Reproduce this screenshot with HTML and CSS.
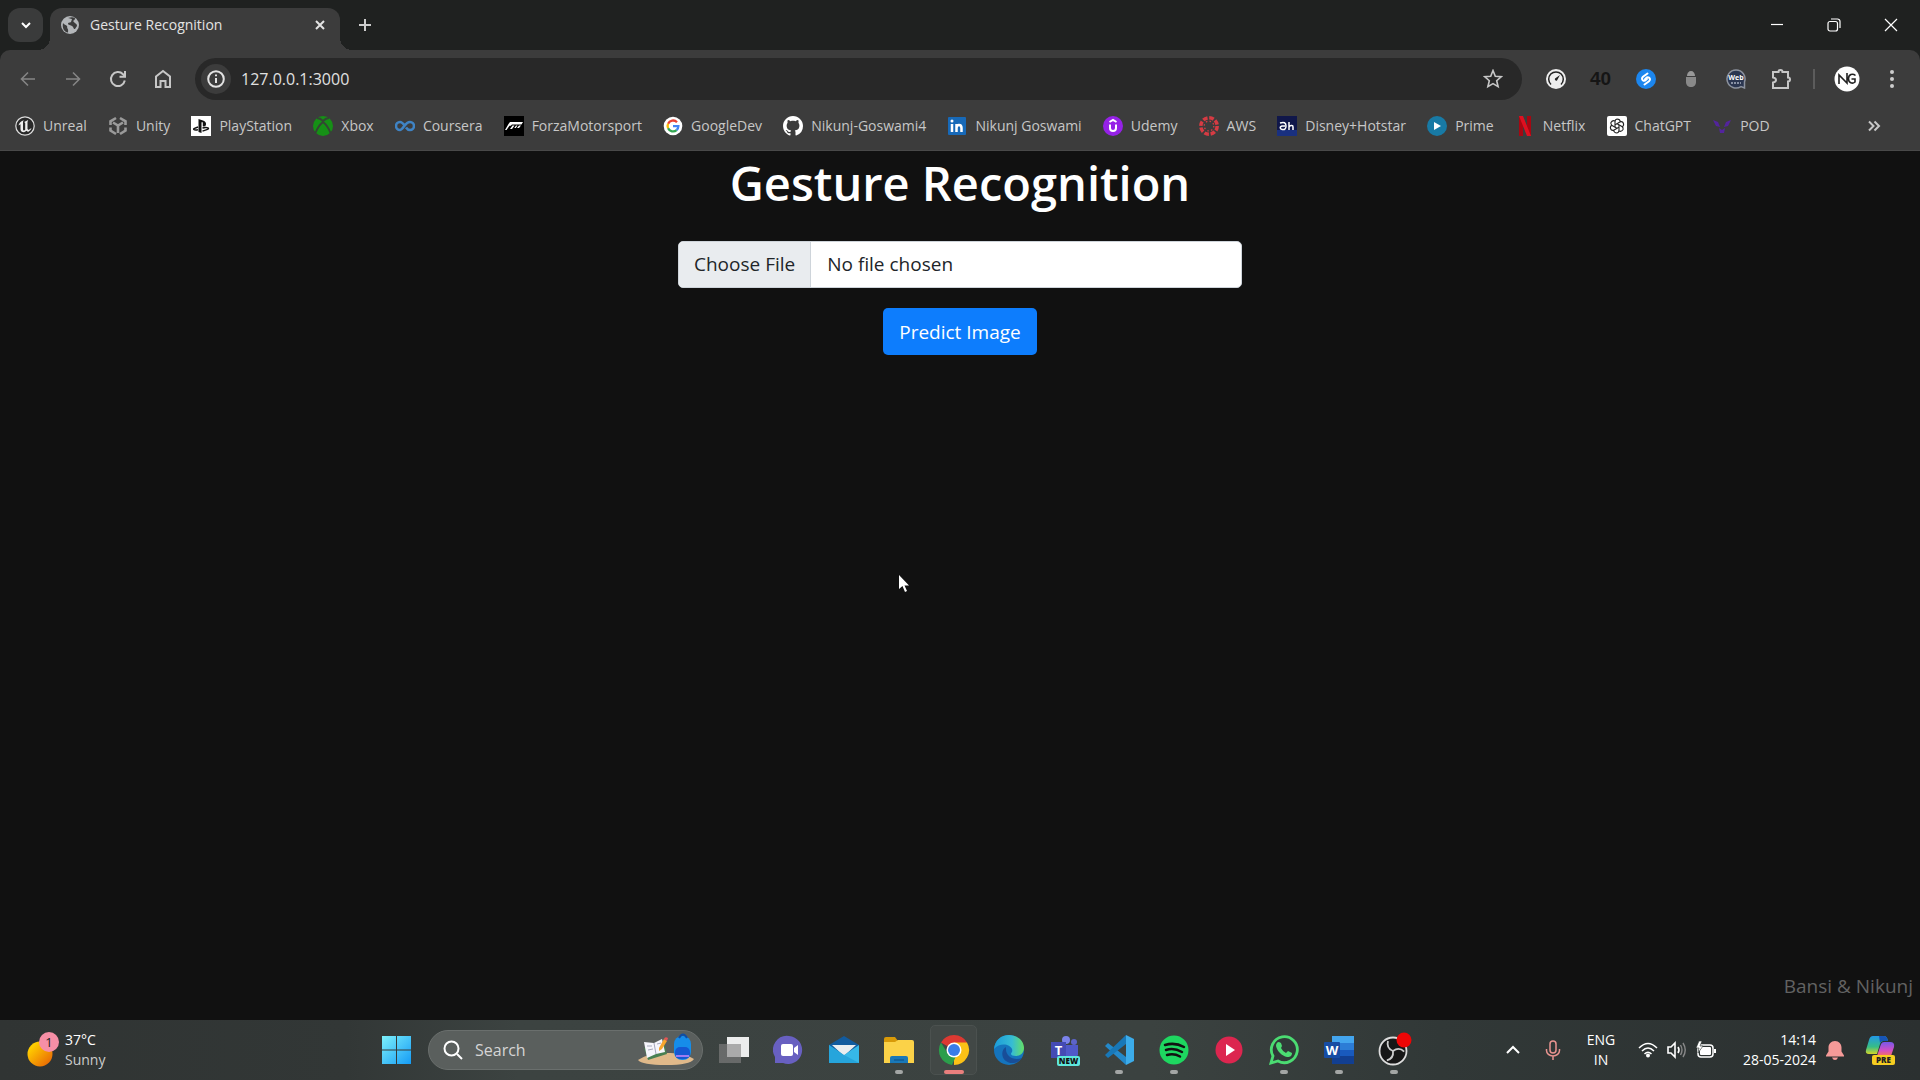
FILE: index.html
```html
<!DOCTYPE html>
<html lang="en">
<head>
<meta charset="utf-8">
<meta name="viewport" content="width=device-width, initial-scale=1">
<title>Gesture Recognition</title>
<link rel="stylesheet" href="styles.css">
</head>
<body>
<div class="screen">
  <header class="browser">
    <div class="titlebar">
      <button class="tab-search" aria-label="Search tabs"><svg width="12" height="12" viewBox="0 0 12 12"><path class="line strong" d="M2 4l4 4 4-4"/></svg></button>
      <div class="tab">
        <svg width="20" height="20" viewBox="0 0 20 20"><circle cx="10" cy="10" r="9" fill="#b4b7ba"/><path fill="#3c3c3c" d="M3 8c1 2 3 1.500 4 3 .6 1-.2 1.600.5 2.500 1 1.200.5 3 .5 4C4 17 2 13 3 8zM8 3c2 0 2 1 4 1l-1 3c-1 1-3 0-3 2 0 1 3 1 4 2 2 1 1 3 3 3l2-3c0-3-2-2-3-4l-1-1c1-1 2-1 2-3C13 2 11 2 8 3z"/></svg>
        <span class="tab-title">Gesture Recognition</span>
        <button class="tab-close" aria-label="Close tab"><svg width="12" height="12" viewBox="0 0 12 12"><path class="line strong" d="M2 2l8 8M10 2l-8 8"/></svg></button>
      </div>
      <button class="new-tab" aria-label="New tab"><svg width="14" height="14" viewBox="0 0 14 14"><path class="line strong" d="M7 1v12M1 7h12"/></svg></button>
      <div class="window-controls">
        <button aria-label="Minimize"><svg width="14" height="14" viewBox="0 0 14 14"><path class="line thin" d="M1 6.500h12"/></svg></button>
        <button aria-label="Restore"><svg width="14" height="14" viewBox="0 0 14 14"><rect class="line thin" x="1" y="3.500" width="9.500" height="9.500" rx="2"/><path class="line thin" d="M4 1h6.500a2.500 2.500 0 0 1 2.500 2.500V10"/></svg></button>
        <button aria-label="Close"><svg width="14" height="14" viewBox="0 0 14 14"><path class="line thin" d="M1 1l12 12M13 1L1 13"/></svg></button>
      </div>
    </div>
    <div class="toolbar-frame">
    <div class="toolbar">
      <button class="slot dim" aria-label="Back"><svg width="16" height="16" viewBox="0 0 16 16"><path class="line mid" d="M15 8H2M8 1.500L1.500 8 8 14.500"/></svg></button>
      <button class="slot dim" aria-label="Forward"><svg width="16" height="16" viewBox="0 0 16 16"><path class="line mid" d="M1 8h13M8 1.500L14.500 8 8 14.500"/></svg></button>
      <button class="slot" aria-label="Reload"><svg width="18" height="18" viewBox="0 0 18 18"><path class="line strong" d="M15.800 10.500A7 7 0 1 1 14 4.200l2 2"/><path class="line strong" d="M16 1v5.700h-5.500"/></svg></button>
      <button class="slot" aria-label="Home"><svg width="18" height="20" viewBox="0 0 18 20"><path class="line strong" d="M2 7.500L9 2l7 5.500V18h-4.500v-6h-5v6H2z"/></svg></button>
      <div class="omnibox">
        <button class="site-info" aria-label="View site information"><svg width="18" height="18" viewBox="0 0 18 18"><circle class="line strong" cx="9" cy="9" r="7.800"/><path class="line strong" d="M9 8v5M9 4.500v1.800"/></svg></button>
        <input class="address" type="text" aria-label="Address" value="127.0.0.1:3000">
        <button class="star" aria-label="Bookmark this page"><svg width="20" height="20" viewBox="0 0 20 20"><path class="line mid" d="M10 1.500l2.300 5.700 6 .5-4.600 4 1.400 6L10 14.600l-5.100 3.100 1.400-6-4.600-4 6-.5z"/></svg></button>
      </div>
      <button class="slot" aria-label="Speed test"><svg width="20" height="20" viewBox="0 0 20 20"><circle cx="10" cy="10" r="10" fill="#eee"/><path d="M5 15.500a7.300 7.300 0 1 1 10 0" fill="none" stroke="#222" stroke-width="1.500"/><path d="M14 6l-3 5.500a1.500 1.500 0 0 1-2-2z" fill="#222"/></svg></button>
      <button class="slot count" aria-label="Counter">40</button>
      <button class="slot" aria-label="Shazam"><svg width="20" height="20" viewBox="0 0 20 20"><circle cx="10" cy="10" r="10" fill="#1c86ee"/><path d="M11.500 4.500L7 7.800q-2 2 0 3.600 1.500 1 3-.5l1-1M8.500 15.500l4.500-3.300q2-2 0-3.600-1.500-1-3 .5l-1 1" fill="none" stroke="#fff" stroke-width="2" stroke-linecap="round"/></svg></button>
      <button class="slot" aria-label="Incognito helper"><svg width="12" height="18" viewBox="0 0 12 18"><path d="M2 6a4 5 0 0 1 8 0z" fill="#999"/><path d="M1 7h10v5c0 3-2 5-5 5s-5-2-5-5z" fill="#898989"/></svg></button>
      <button class="slot" aria-label="WebChatGPT"><svg width="20" height="20" viewBox="0 0 20 20"><path d="M10 1a9 9 0 1 0 5 16.500l3.500 1.500V13A9 9 0 0 0 10 1z" fill="#2b3650" stroke="#8c929e" stroke-width="1.500"/><text x="10" y="11" text-anchor="middle" font-size="7" font-weight="700" fill="#fff">Web</text><path d="M5 14h10" stroke="#a7afbf" stroke-width="1.500" stroke-dasharray="2 1"/></svg></button>
      <button class="slot" aria-label="Extensions"><svg width="22" height="22" viewBox="0 0 22 22"><path class="line strong" d="M3 4h5.500a2 2 0 0 1 4 0H18v5.500a2 2 0 0 1 0 4V20H3v-5.500q3-.5 3-2.500T3 9.500z"/></svg></button>
      <span class="divider"></span>
      <button class="slot" aria-label="Profile"><svg width="26" height="26" viewBox="0 0 26 26"><circle cx="13" cy="13" r="12.500" fill="#fff"/><path d="M5 18V9l8 8V7M21.500 9.500c-3-2.500-7-1-7 3.200 0 4.300 4 5.500 6.500 3.300v-3h-3.500" fill="none" stroke="#222" stroke-width="1.600"/></svg></button>
      <button class="slot" aria-label="Menu"><svg width="6" height="20" viewBox="0 0 6 20"><g fill="#ccc"><circle cx="3" cy="3" r="2"/><circle cx="3" cy="10" r="2"/><circle cx="3" cy="17" r="2"/></g></svg></button>
    </div>
    <nav class="bookmarks" aria-label="Bookmarks">
      <a href="#"><svg viewBox="0 0 20 20"><circle cx="10" cy="10" r="9.200" fill="#292929" stroke="#ddd" stroke-width="1.200"/><path fill="#eee" d="M3.500 9.500C4 7 6 5 9 4.300 8.200 5 8 5.500 8 6.500v7c0 1 1.200 1.300 2.200.3V7l-1-1 4-2-.7 2v7l1 1L16.500 12c-.8 2.200-2 3.200-3.500 4l-1.300-1.300L9 16.300c-2.200 0-3.500-1-3.500-3V8.300z"/></svg>Unreal</a>
      <a href="#"><svg viewBox="0 0 20 20"><g fill="none" stroke="#9a9a9a" stroke-width="2.600"><path d="M8 2L2.500 5.300V9M12 2l5.500 3.300V9M2.500 11.500v3L8 18M17.500 11.500v3L12 18"/><path d="M5 6.500l5 3 5-3M10 9.500V17"/></g></svg>Unity</a>
      <a href="#"><svg viewBox="0 0 20 20"><path fill="#fff" d="M0 0h20v20H0z"/><path fill="#111" d="M7.500 3l4.500 1.400c2.500.9 3.200 2.300 3 4.200-.3 1.900-1.500 2.300-3.200 1.600V6.500q-.9-1.200-1.300 0V17l-3-1z"/><path d="M7 11l-4 1.600q-1 .8.500 1.300 1.800.4 3.500-.3M11.500 12q3.500-1 5.500-.1 1.200.8-.5 1.400l-5 1.800" fill="none" stroke="#111" stroke-width="1.400"/></svg>PlayStation</a>
      <a href="#"><svg viewBox="0 0 20 20"><circle cx="10" cy="10" r="10" fill="#169016"/><path d="M4 2q3 0 6 3 3-3 6-3M2.500 17Q5 10 10 6q5 4 7.500 11" fill="none" stroke="#344534" stroke-width="1.900"/></svg>Xbox</a>
      <a href="#"><svg viewBox="0 0 20 20"><path d="M10 10C7.500 6.500 6.500 6 5 6a4 4 0 0 0 0 8c3 0 5-8 10-8a4 4 0 0 1 0 8c-2 0-3-1-4-2.500" fill="none" stroke="#3f83c4" stroke-width="2.600"/></svg>Coursera</a>
      <a href="#"><svg viewBox="0 0 20 20"><path d="M0 0h20v20H0z"/><path fill="#fff" d="M6 6h13l-1.500 2.500H8L6.800 9.700H5.500L2.500 14H1l3.500-6zM8.500 9.500h2L8 13H6zM12 9.500h1.500l-1.700 2.500h-1.500zM15 9.500h2l-2 2.500h-2z"/></svg>ForzaMotorsport</a>
      <a href="#"><svg viewBox="0 0 20 20"><circle cx="10" cy="10" r="9.300" fill="#fff"/><g fill="none" stroke-width="2.300"><path d="M14 6.200A5.400 5.400 0 0 0 5.100 7.800" stroke="#ea4335"/><path d="M5.100 7.800a5.400 5.400 0 0 0 0 4.500" stroke="#fbbc05"/><path d="M5.100 12.200a5.400 5.400 0 0 0 8.500 1.900" stroke="#34a853"/><path d="M13.600 14.100a5.400 5.400 0 0 0 1.800-4H10" stroke="#4285f4"/></g></svg>GoogleDev</a>
      <a href="#"><svg viewBox="0 0 16 16"><path fill="#fff" d="M8 0C3.580 0 0 3.580 0 8c0 3.540 2.290 6.530 5.470 7.590.4.070.55-.17.55-.38 0-.19-.01-.82-.01-1.490-2.010.37-2.530-.49-2.690-.94-.09-.23-.48-.94-.82-1.130-.28-.15-.68-.52-.01-.53.63-.01 1.080.58 1.230.82.72 1.210 1.870.87 2.330.66.07-.52.28-.87.51-1.070-1.780-.2-3.640-.89-3.640-3.950 0-.87.31-1.590.82-2.150-.08-.2-.36-1.020.08-2.120 0 0 .67-.21 2.200.82.64-.18 1.320-.27 2-.27s1.360.09 2 .27c1.530-1.040 2.200-.82 2.200-.82.44 1.100.16 1.920.08 2.120.51.56.82 1.270.82 2.150 0 3.070-1.870 3.750-3.650 3.950.29.25.54.73.54 1.480 0 1.070-.01 1.930-.01 2.200 0 .21.15.46.55.38A8 8 0 0 0 16 8c0-4.420-3.580-8-8-8z"/></svg>Nikunj-Goswami4</a>
      <a href="#"><svg viewBox="0 0 20 20"><rect x="1" y="1" width="18" height="18" rx="1" fill="#1769b8"/><path d="M5 8v8M9.500 16V8M9.500 12q0-3 2.500-3t2.500 3v4" fill="none" stroke="#fff" stroke-width="2.500"/><circle cx="5" cy="5" r="1.500" fill="#fff"/></svg>Nikunj Goswami</a>
      <a href="#"><svg viewBox="0 0 20 20"><circle cx="10" cy="10" r="10" fill="#9521e6"/><path d="M6.500 6L10 4l3.500 2M7 8.500V12q0 3 3 3t3-3V8.500" fill="none" stroke="#fff" stroke-width="2"/></svg>Udemy</a>
      <a href="#"><svg viewBox="0 0 20 20"><circle cx="10" cy="10" r="8.200" fill="none" stroke="#d63b43" stroke-width="3.500" stroke-dasharray="4.700 1.740"/><circle cx="10" cy="10" r="4.800" fill="none" stroke="#d63b43" stroke-width="1.300" stroke-dasharray="1.500 2.270"/></svg>AWS</a>
      <a href="#"><svg viewBox="0 0 20 20"><path fill="#10174a" d="M0 0h20v20H0z"/><path fill="#193080" d="M0 14h20v6H0z"/><path d="M3 7q6-2 6 3t-5 3q-2-2 1-3h3M12 6v8M12 11q1-2 3-1.500 1 0 1 1.500v3" fill="none" stroke="#fff" stroke-width="1.500"/></svg>Disney+Hotstar</a>
      <a href="#"><svg viewBox="0 0 20 20"><circle cx="10" cy="10" r="10" fill="#187aa5"/><path fill="#fff" d="M7 6l7 4-7 4z"/></svg>Prime</a>
      <a href="#"><svg viewBox="0 0 20 20"><path fill="#a60712" d="M4 0h4v20H4zM12 0h4v20h-4z"/><path fill="#df1020" d="M4 0h4l8 20h-4z"/></svg>Netflix</a>
      <a href="#"><svg viewBox="0 0 20 20"><rect width="20" height="20" rx="2" fill="#fff"/><g fill="none" stroke="#222" stroke-width="1.100"><path id="petal" d="M8 11V5.500q0-2 2-2.500 3 0 3.500 3"/><use href="#petal" transform="rotate(60 10 10)"/><use href="#petal" transform="rotate(120 10 10)"/><use href="#petal" transform="rotate(180 10 10)"/><use href="#petal" transform="rotate(240 10 10)"/><use href="#petal" transform="rotate(300 10 10)"/></g></svg>ChatGPT</a>
      <a href="#"><svg viewBox="0 0 20 20"><path d="M1 4l5 2 2 5-4-1zM19 4l-5 2-2 5 4-1zM7 12l3 2 3-2-1 5H8z" fill="#53249d"/></svg>POD</a>
      <button class="more" aria-label="More bookmarks"><svg width="14" height="12" viewBox="0 0 14 12"><path class="line strong" d="M2 1.500L6.500 6 2 10.500M7.500 1.500L12 6l-4.500 4.500"/></svg></button>
    </nav>
    </div>
  </header>

  <main class="page">
    <h1>Gesture Recognition</h1>
    <form class="predict">
      <input class="file" type="file" aria-label="Image to predict">
      <button class="submit" type="button">Predict Image</button>
    </form>
    <p class="credit">Bansi &amp; Nikunj</p>
    <svg class="cursor" width="12" height="18" viewBox="0 0 12 18"><path fill="#fff" d="M0 0v14l3.500-3 2.500 6 2-1-2.500-5.500H10z"/></svg>
  </main>

  <footer class="taskbar">
    <a class="weather" href="#">
      <svg width="32" height="36" viewBox="0 0 32 36"><defs><linearGradient id="sun" x2="1" y2="1"><stop offset=".2" stop-color="#fc0"/><stop offset="1" stop-color="#e55a06"/></linearGradient></defs><circle cx="13" cy="22" r="12.500" fill="url(#sun)"/><circle cx="22" cy="10" r="10" fill="#f68fa6"/><text x="22" y="15" text-anchor="middle" font-size="13" fill="#222">1</text></svg>
      <span class="weather-text"><span>37°C</span><span class="soft">Sunny</span></span>
    </a>
    <nav class="apps" aria-label="Taskbar">
      <button class="app" aria-label="Start"><svg width="30" height="30" viewBox="0 0 30 30"><defs><linearGradient id="win" x2="1" y2="1"><stop stop-color="#7df1fb"/><stop offset="1" stop-color="#159bf5"/></linearGradient></defs><path fill="url(#win)" d="M0 1h14v13.500H0zM15 1h14v13.500H15zM0 15.500h14V29H0zM15 15.500h14V29H15z"/></svg></button>
      <label class="search">
        <svg width="20" height="20" viewBox="0 0 20 20"><circle class="line strong" cx="8.500" cy="8.500" r="7"/><path class="line strong" d="M14 14l5 5"/></svg>
        <input type="text" placeholder="Search" aria-label="Search">
        <svg width="58" height="34" viewBox="0 0 58 34"><path d="M1 27q12-8 28-7 18-1 28 6-4 6-28 6T1 27z" fill="#e0b98a"/><path d="M7 15l20-6 3 12-19 6z" fill="#488052"/><path d="M7 9l10 1 8-4 3 13-9 2-9 4z" fill="#f5f5fb"/><path d="M17 10l2 11M10 13l5 0M11 17l5-1M20 11l4-1" stroke="#a5a7bb"/><path d="M22 15l5-9 3 2-5 8-3 2z" fill="#f7a62e"/><path d="M27 6q1-3 4-1l-1 3z" fill="#e65555"/><rect x="37" y="3" width="17" height="24" rx="8" fill="#168de9"/><path d="M42 5q4-7 8 0" fill="none" stroke="#0e4da6" stroke-width="2"/><rect x="38" y="14" width="15" height="12" rx="5" fill="#1558d2"/><path d="M39 23h13" stroke="#9e7bf2" stroke-width="2"/></svg>
      </label>
      <button class="app" aria-label="Task view"><svg width="32" height="30" viewBox="0 0 32 30"><path fill="#eceded" d="M9 2h22v20H9z"/><path fill="#777" fill-opacity=".75" d="M1 9h22v19H1z"/><path fill="#aaa" d="M9 9h14v13H9z"/></svg></button>
      <button class="app" aria-label="Chat"><svg width="32" height="30" viewBox="0 0 32 30"><path d="M16 1a14 14 0 1 1-6 27H2v-6A14 14 0 0 1 16 1z" fill="#6860c1"/><rect x="8" y="9" width="12" height="12" rx="2" fill="#fff"/><path fill="#fff" d="M21 13l4-3v10l-4-3z"/></svg></button>
      <button class="app" aria-label="Mail"><svg width="32" height="30" viewBox="0 0 32 30"><path fill="#125b9e" d="M1 10L16 1l15 9v8H1z"/><path fill="#e9edf0" d="M4 10h24l-12 11z"/><path fill="#36b8e8" d="M1 10l15 10 15-10v18H1z"/><path fill="#1691d0" d="M16 20l15 8H1V10z" opacity=".5"/></svg></button>
      <button class="app running" aria-label="File Explorer"><svg width="32" height="30" viewBox="0 0 32 30"><path fill="#d89a08" d="M1 4q0-2 2-2h9l3 4v6H1z"/><path fill="#fbd248" d="M1 7l11 0 3-2h14q2 0 2 2v21H1z"/><path fill="#1978b8" d="M7 28v-5q0-2 2-2h14q2 0 2 2v5z"/><path d="M11 25h10" stroke="#0b4d82"/></svg></button>
      <button class="app running active" aria-label="Chrome"><svg width="32" height="32" viewBox="0 0 32 32"><path fill="#dc3932" d="M16 16L3 8.500a15 15 0 0 1 26 0z"/><path fill="#fbc116" d="M16 16V8.500h13A15 15 0 0 1 16 31z"/><path fill="#2b9e4b" d="M3 8.500L10 20l8 2-4 9A15 15 0 0 1 3 8.500z"/><circle cx="16" cy="16" r="7.500" fill="#fff"/><circle cx="16" cy="16" r="6" fill="#397de8"/></svg></button>
      <button class="app" aria-label="Edge"><svg width="32" height="32" viewBox="0 0 32 32"><defs><linearGradient id="edge"><stop stop-color="#1b9bda"/><stop offset=".6" stop-color="#36bcd4"/><stop offset="1" stop-color="#65df65"/></linearGradient></defs><circle cx="16" cy="16" r="15" fill="#1574bd"/><path fill="url(#edge)" d="M1 15C2 6 8 1 16 1c9 0 15 6 15 13 0 5-4 8-8 8-3 0-5-1-5-2s2-2 1-5C17 10 7 8 1 15z"/><path fill="#184e98" d="M13 13c-7 4-4 17 8 16 4-1 6-2 8-5-8 3-17-1-16-11z"/></svg></button>
      <button class="app" aria-label="Microsoft Teams"><svg width="32" height="32" viewBox="0 0 32 32"><circle cx="18" cy="6" r="4" fill="#7b83eb"/><circle cx="26" cy="8" r="3" fill="#5d64c9"/><path fill="#5059c9" d="M12 11h18v10l-4 5H12z"/><path fill="#444ab4" d="M3 8h15v16H3z"/><text x="10.500" y="21" text-anchor="middle" font-size="13" font-weight="700" fill="#fff">T</text><rect x="9" y="22" width="23" height="10" rx="2" fill="#5ee7dd"/><text x="20.500" y="30" text-anchor="middle" font-size="8" font-weight="800" fill="#111">NEW</text></svg></button>
      <button class="app running" aria-label="Visual Studio Code"><svg width="32" height="32" viewBox="0 0 32 32"><path fill="#2489ca" d="M2 12l3-3 18 14v8z"/><path fill="#1878b8" d="M23 1v9L5 24l-3-3z"/><path fill="#3cacea" d="M23 1l8 4v22l-8 4z"/></svg></button>
      <button class="app running" aria-label="Spotify"><svg width="32" height="32" viewBox="0 0 32 32"><circle cx="16" cy="16" r="14.500" fill="#1ed760"/><path d="M7 11q10-3 19 2M8 16q8-2.500 16 2M9 21q7-2 13 1.500" fill="none" stroke="#111" stroke-width="2.500" stroke-linecap="round"/></svg></button>
      <button class="app" aria-label="Media player"><svg width="32" height="32" viewBox="0 0 32 32"><circle cx="16" cy="16" r="13.500" fill="#dc264f"/><path fill="#fff" d="M13 10l9 6-9 6z"/></svg></button>
      <button class="app running" aria-label="WhatsApp"><svg width="32" height="32" viewBox="0 0 32 32"><path d="M3 29l2-7a13 13 0 1 1 5 5z" fill="#303a38" stroke="#4bdc72" stroke-width="2.800"/><path fill="#4bdc72" d="M11 8l2 1 1 3-1 2q2 4 5 5l2-2 4 2c0 4-3 4-5 4-5-1-10-6-11-11 0-2 1-4 3-4z"/></svg></button>
      <button class="app running" aria-label="Word"><svg width="32" height="32" viewBox="0 0 32 32"><path fill="#43a5ee" d="M9 2h22v8H9z"/><path fill="#2c7cd6" d="M9 9h22v8H9z"/><path fill="#195abd" d="M9 16h22v7H9z"/><path fill="#123f91" d="M9 22h22v8H9z"/><rect x="1" y="8" width="16" height="16" rx="1" fill="#164ca4"/><text x="9" y="21" text-anchor="middle" font-size="13" font-weight="700" fill="#fff">W</text></svg></button>
      <button class="app running" aria-label="OBS Studio"><svg width="36" height="36" viewBox="0 0 36 36"><circle cx="17" cy="19" r="13.500" fill="#171717" stroke="#ddd" stroke-width="1.800"/><g fill="none" stroke="#ccc" stroke-width="1.800"><path id="blade" d="M17 19q-7-3-5-10"/><use href="#blade" transform="rotate(120 17 19)"/><use href="#blade" transform="rotate(240 17 19)"/></g><circle cx="28" cy="8" r="7.500" fill="#ed0606"/></svg></button>
    </nav>
    <div class="tray">
      <button class="slot small" aria-label="Show hidden icons"><svg width="16" height="10" viewBox="0 0 16 10"><path class="line strong" d="M2 8l6-6 6 6"/></svg></button>
      <button class="slot small" aria-label="Microphone"><svg width="16" height="20" viewBox="0 0 16 20"><g fill="none" stroke="#e99490" stroke-width="1.500"><rect x="5" y="1" width="6" height="12" rx="3"/><path d="M1.500 9v1.500a6.500 5.500 0 0 0 13 0V9M8 16v4"/></g></svg></button>
      <button class="language" aria-label="Language">ENG<br>IN</button>
      <button class="status" aria-label="Quick settings">
        <svg width="20" height="16" viewBox="0 0 20 16"><g fill="none" stroke="#fff" stroke-width="1.500"><path d="M1 6q9-9 18 0M4 9q6-6 12 0M6.500 12q3.500-3.500 7 0"/></g><circle cx="10" cy="13.500" r="2" fill="#fff"/></svg>
        <svg width="20" height="18" viewBox="0 0 20 18"><path class="line mid" d="M1 6v6h3l4 4V2L4 6zM11 6q2 3 0 6"/><path d="M13.500 4q3 5 0 10M16 2q4.500 7 0 14" fill="none" stroke="#888" stroke-width="1.400"/></svg>
        <svg width="22" height="18" viewBox="0 0 22 18"><rect x="3" y="4" width="15" height="12" rx="3" fill="none" stroke="#fff" stroke-width="1.500"/><rect x="5" y="6" width="11" height="8" rx="1" fill="#fff"/><path d="M20 8v4" stroke="#fff" stroke-width="2"/><path d="M4 0L1 7h3l-1 5 5-7H5l2-5z" fill="#fff" stroke="#2c3231" stroke-width=".6"/></svg>
      </button>
      <button class="clock" aria-label="Clock">14:14<br>28-05-2024</button>
      <button class="bell" aria-label="Notifications"><svg width="18" height="20" viewBox="0 0 18 20"><path fill="#f59a98" d="M9 1C5 1 2.500 4 2.500 7.500v4L0 15.500v1h18v-1l-2.500-4v-4C15.500 4 13 1 9 1zM6 17.500h6q-1 2.500-3 2.500t-3-2.500z"/></svg></button>
      <button class="copilot" aria-label="Copilot"><svg width="30" height="30" viewBox="0 0 30 30"><defs><linearGradient id="copA" x2="0" y2="1"><stop stop-color="#2299e8"/><stop offset=".6" stop-color="#36bd86"/><stop offset="1" stop-color="#d3d629"/></linearGradient><linearGradient id="copB" x2="0" y2="1"><stop stop-color="#7659eb"/><stop offset=".6" stop-color="#d34fc3"/><stop offset="1" stop-color="#f57060"/></linearGradient></defs><path fill="url(#copA)" d="M8 1h11q3 0 4 5h-5q-2 0-3 3l-3 10H4q-4 0-3-4L4 5q1-4 4-4z"/><path fill="#1755b6" d="M14 1h5q3 0 4 5h-5q-2 0-3 2z"/><path fill="url(#copB)" d="M19 7h6q5 0 4 5l-3 9H12l4-12q1-2 3-2z"/><rect x="7" y="20" width="23" height="10" rx="2" fill="#f6cd21"/><text x="18.500" y="28" text-anchor="middle" font-size="8" font-weight="800" fill="#222">PRE</text></svg></button>
    </div>
  </footer>
</div>
</body>
</html>
```
FILE: styles.css
```css
* { box-sizing: border-box; }

body {
  margin: 0;
  background: #111;
  color: #fff;
  font-family: "Open Sans", "Noto Sans", sans-serif;
}

button, input {
  font: inherit;
  color: inherit;
  border: 0;
  background: none;
  padding: 0;
  margin: 0;
}

a { color: inherit; text-decoration: none; }
svg { display: block; flex: none; }

.line { fill: none; stroke: currentColor; }
.strong { stroke-width: 2; }
.mid { stroke-width: 1.6; }
.thin { stroke-width: 1.2; }

.screen {
  min-height: 100vh;
  display: flex;
  flex-direction: column;
}

/* Browser window */
.browser { background: #1f2120; }

.titlebar {
  height: 50px;
  display: flex;
  align-items: flex-end;
  padding-left: 8px;
}

.tab-search {
  width: 35px;
  height: 34px;
  margin-bottom: 8px;
  border-radius: 12px;
  background: #3a3b3b;
  display: grid;
  place-items: center;
}

.tab {
  position: relative;
  width: 290px;
  height: 42px;
  margin-left: 7px;
  padding: 0 14px 8px 10px;
  border-radius: 12px 12px 0 0;
  background: #3c3c3c;
  display: flex;
  align-items: center;
  gap: 10px;
  font-size: 14px;
  line-height: 20px;
  color: #e3e3e3;
}

.tab::before, .tab::after {
  content: "";
  position: absolute;
  bottom: 0;
  width: 12px;
  height: 12px;
}
.tab::before { left: -12px; background: radial-gradient(circle at 0 0, transparent 12px, #3c3c3c 12px); }
.tab::after { right: -12px; background: radial-gradient(circle at 100% 0, transparent 12px, #3c3c3c 12px); }

.tab-title { flex: 1; }

.new-tab {
  width: 50px;
  height: 34px;
  margin-bottom: 8px;
  display: grid;
  place-items: center;
  color: #ccc;
}

.window-controls {
  height: 50px;
  margin-left: auto;
  padding-right: 1px;
  display: flex;
}
.window-controls button {
  width: 57px;
  display: grid;
  place-items: center;
}

.toolbar-frame {
  background: #3c3c3c;
  border-radius: 10px 10px 0 0;
  border-bottom: 1px solid #494949;
  color: #c7c7c7;
}

.toolbar {
  height: 58px;
  padding: 0 6px 0 5px;
  display: flex;
  align-items: center;
}

.slot {
  width: 45px;
  height: 40px;
  flex: none;
  display: grid;
  place-items: center;
}
.slot.small { width: 40px; }
.dim { color: #858585; }

.count {
  font-family: "Liberation Sans", sans-serif;
  font-weight: 700;
  font-size: 19px;
  color: #151515;
}

.omnibox {
  flex: 1;
  height: 42px;
  margin: 0 11px 0 10px;
  padding: 0 19px 0 6px;
  border-radius: 21px;
  background: #282828;
  display: flex;
  align-items: center;
  gap: 10px;
}

.site-info {
  width: 30px;
  height: 30px;
  border-radius: 15px;
  background: #3c3c3c;
  display: grid;
  place-items: center;
  color: #e3e3e3;
}

.address {
  flex: 1;
  font-size: 16px;
  line-height: 24px;
  color: #e0e0e0;
}

.divider {
  width: 2px;
  height: 20px;
  margin: 0 9px 0 10px;
  background: #5c5c5c;
}

.bookmarks {
  height: 42px;
  padding: 0 39px 6px 15px;
  display: flex;
  align-items: center;
  justify-content: space-between;
  font-size: 14px;
  line-height: 20px;
}
.bookmarks a {
  display: flex;
  align-items: center;
  gap: 8px;
  white-space: nowrap;
}
.bookmarks a svg { width: 20px; height: 20px; }
.more { margin-left: 76px; }

/* Web page */
.page {
  position: relative;
  flex: 1;
  display: flex;
  flex-direction: column;
  align-items: center;
  font-size: 19px;
  line-height: 30px;
}

h1 {
  margin: 0;
  padding: 2px 0 28px;
  font-size: 47px;
  line-height: 60px;
  font-weight: 600;
}

.predict {
  width: 564px;
  max-width: 100%;
  display: flex;
  flex-direction: column;
  align-items: center;
  gap: 20px;
}

.file {
  width: 100%;
  height: 47px;
  border: 1px solid #ced4da;
  border-radius: 5px;
  background: #fff;
  color: #212529;
  font-size: 19px;
  line-height: 45px;
  overflow: hidden;
}
.file::file-selector-button {
  height: 45px;
  margin: 0 16px 0 0;
  padding: 0 15px;
  border: 0;
  border-right: 1px solid #ced4da;
  background: #e9ecef;
  color: #212529;
  font: inherit;
}

.submit {
  height: 47px;
  padding: 0 16px;
  border-radius: 5px;
  background: #0d7dfd;
  color: #fff;
  font-size: 19px;
}

.credit {
  margin: auto 7px 19px auto;
  font-size: 19px;
  color: #626262;
}

.cursor {
  position: absolute;
  left: 899px;
  top: 424px;
}

/* Taskbar */
.taskbar {
  height: 60px;
  display: grid;
  grid-template-columns: 369px 1fr auto;
  align-items: center;
  background: linear-gradient(90deg, #303433 0, #323736 18%, #3c4341 27%, #3b4240 60%, #313837 75%, #2b3030 100%);
  font-size: 14px;
  line-height: 20px;
}

.weather {
  padding-left: 27px;
  display: flex;
  align-items: center;
  gap: 6px;
}
.weather-text { display: flex; flex-direction: column; }
.soft { color: #ccc; }

.apps { display: flex; align-items: center; }

.app {
  position: relative;
  width: 55px;
  height: 60px;
  flex: none;
  display: grid;
  place-items: center;
}

.active::before {
  content: "";
  position: absolute;
  inset: 5px 4px;
  border-radius: 5px;
  border: 1px solid #4b514f;
  background: #424846;
}
.active svg { position: relative; }

.running::after {
  content: "";
  position: absolute;
  bottom: 6px;
  left: 24px;
  width: 8px;
  height: 4px;
  border-radius: 2px;
  background: #a3a6a5;
}
.active::after { left: 18px; width: 20px; background: #e97f7d; }

.search {
  width: 275px;
  height: 40px;
  margin: 0 3px 0 4px;
  padding: 0 7px 0 14px;
  border: 1px solid #6a6f6d;
  border-radius: 20px;
  background: #5a5f5d;
  display: flex;
  align-items: center;
  gap: 12px;
}
.search input { flex: 1; min-width: 0; font-size: 16px; }
.search input::placeholder { color: #d5d5d5; opacity: 1; }

.tray {
  display: flex;
  align-items: center;
  padding-right: 25px;
}
.language { width: 56px; }
.status {
  width: 90px;
  display: flex;
  align-items: center;
  justify-content: space-between;
  padding: 0 2px 0 9px;
}
.clock { width: 97px; text-align: right; }
.bell { margin: 0 21px 0 10px; }
```
